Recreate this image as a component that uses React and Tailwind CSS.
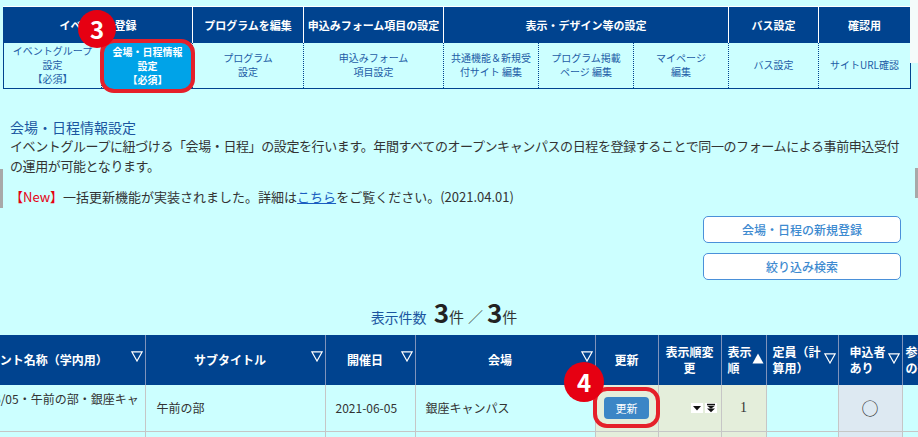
import React from 'react';

const FONT = '"Noto Sans CJK JP", "Noto Sans", sans-serif';

function SortIcon({ filled = false, two = false }) {
  return (
    <svg
      width="12"
      height="11"
      viewBox="0 0 12 11"
      className={`absolute right-[2px] ${two ? 'top-[18px]' : 'top-[16px]'}`}
    >
      {filled ? (
        <polygon points="6,0.5 11.5,10.5 0.5,10.5" fill="#ffffff" />
      ) : (
        <polygon points="0.8,0.8 11.2,0.8 6,10" fill="none" stroke="#ffffff" strokeWidth="1.2" />
      )}
    </svg>
  );
}

function OrderIcons() {
  return (
    <div className="flex justify-end gap-[2px] pr-[4px]">
      <svg width="12" height="10" viewBox="0 0 12 10">
        <rect width="12" height="10" fill="#ffffff" />
        <polygon points="2,3 10,3 6,7.5" fill="#111111" />
      </svg>
      <svg width="12" height="10" viewBox="0 0 12 10">
        <rect width="12" height="10" fill="#ffffff" />
        <rect x="2" y="0.8" width="8" height="1.4" fill="#111111" />
        <polygon points="2,2.8 10,2.8 6,5.8" fill="#111111" />
        <polygon points="2,5.6 10,5.6 6,9.2" fill="#111111" />
      </svg>
    </div>
  );
}

function NavTable() {
  return (
    <table className="border-collapse table-fixed w-[907px] border border-[#00438f]">
      <colgroup>
        <col className="w-[98px]" />
        <col className="w-[91px]" />
        <col className="w-[111px]" />
        <col className="w-[140px]" />
        <col className="w-[95px]" />
        <col className="w-[95px]" />
        <col className="w-[95px]" />
        <col className="w-[90px]" />
        <col className="w-[92px]" />
      </colgroup>
      <thead>
        <tr className="h-[36px] bg-[#00438f] text-white text-[11px] font-bold">
          <th colSpan={2} className="border-t border-white">イベントを登録</th>
          <th className="border-t border-l border-white">プログラムを編集</th>
          <th className="border-t border-l border-white">申込みフォーム項目の設定</th>
          <th colSpan={3} className="border-t border-l border-white">表示・デザイン等の設定</th>
          <th className="border-t border-l border-white">バス設定</th>
          <th className="border-t border-l border-white">確認用</th>
        </tr>
      </thead>
      <tbody>
        <tr className="h-[46px] text-[10px] leading-[14px] text-[#1d5ca6] text-center">
          <td>イベントグループ<br />設定<br />【必須】</td>
          <td className="relative border-l border-dotted border-[#00438f]">
            <div className="absolute -left-[2px] -right-[3px] -top-[4px] -bottom-[5px] rounded-[14px] border-[4px] border-[#e5202a] bg-[#00a3e8] flex items-center justify-center text-white font-bold">
              <span>会場・日程情報<br />設定<br />【必須】</span>
            </div>
          </td>
          <td className="border-l border-dotted border-[#00438f]">プログラム<br />設定</td>
          <td className="border-l border-dotted border-[#00438f]">申込みフォーム<br />項目設定</td>
          <td className="border-l border-dotted border-[#00438f]">共通機能＆新規受<br />付サイト 編集</td>
          <td className="border-l border-dotted border-[#00438f]">プログラム掲載<br />ページ 編集</td>
          <td className="border-l border-dotted border-[#00438f]">マイページ<br />編集</td>
          <td className="border-l border-dotted border-[#00438f]">バス設定</td>
          <td className="border-l border-dotted border-[#00438f]">サイトURL確認</td>
        </tr>
      </tbody>
    </table>
  );
}

function ListRow({ first }) {
  return (
    <tr className="h-[46px] text-[12px] leading-[18px] text-[#333333]">
      <td className="pl-[29px] border-b border-[#c6c6c6] whitespace-nowrap">
        2021/06/05・午前の部・銀座キャ<br />ンパス
      </td>
      <td className="pl-[11px] border-l border-b border-[#c6c6c6]">午前の部</td>
      <td className="pl-[10px] border-l border-b border-[#c6c6c6]">2021-06-05</td>
      <td className="pl-[10px] border-l border-b border-[#c6c6c6]">銀座キャンパス</td>
      <td className="border-l border-b border-[#c6c6c6] bg-[#e4eedb] text-center">
        {first ? (
          <div className="relative inline-flex items-center justify-center">
            <div className="w-[45px] h-[22px] rounded-[4px] bg-[#3b86c6] text-white text-[11px] flex items-center justify-center">更新</div>
            <div className="absolute -left-[11px] -right-[11px] -top-[10px] -bottom-[9px] rounded-[14px] border-[4px] border-[#e5202a]" />
          </div>
        ) : (
          <div className="inline-flex w-[45px] h-[22px] rounded-[4px] bg-[#3b86c6] text-white text-[11px] items-center justify-center">更新</div>
        )}
      </td>
      <td className="border-l border-b border-[#c6c6c6] bg-[#e4eedb]">
        <OrderIcons />
      </td>
      <td className="border-l border-b border-[#c6c6c6] bg-[#e4eedb] text-center font-['Liberation_Serif'] text-[14px]">
        {first ? 1 : 2}
      </td>
      <td className="border-l border-b border-[#c6c6c6]"></td>
      <td className="border-l border-b border-[#c6c6c6] bg-[#dde9f2] text-center text-[17px]">○</td>
      <td className="border-l border-b border-[#c6c6c6]"></td>
    </tr>
  );
}

function ListTable() {
  const th = 'relative border-l border-[#7f93bb] font-bold text-center pr-[10px]';
  return (
    <div className="overflow-hidden w-[918px] mt-[10px]">
      <table className="border-collapse table-fixed w-[1055px] -ml-[73px]">
        <colgroup>
          <col className="w-[218px]" />
          <col className="w-[180px]" />
          <col className="w-[90px]" />
          <col className="w-[180px]" />
          <col className="w-[63px]" />
          <col className="w-[63px]" />
          <col className="w-[45px]" />
          <col className="w-[72px]" />
          <col className="w-[64px]" />
          <col className="w-[80px]" />
        </colgroup>
        <thead>
          <tr className="h-[50px] bg-[#00438f] text-white text-[12px] leading-[16px]">
            <th className="relative font-bold text-center pl-[22px] pr-[10px]">イベント名称（学内用）<SortIcon /></th>
            <th className={th}>サブタイトル<SortIcon /></th>
            <th className={th}>開催日<SortIcon /></th>
            <th className={th}>会場<SortIcon /></th>
            <th className="border-l border-[#7f93bb] font-bold text-center">更新</th>
            <th className="border-l border-[#7f93bb] font-bold text-center">表示順変<br />更</th>
            <th className="relative border-l border-[#7f93bb] font-bold text-left pl-[6px]">表示<br />順<SortIcon filled two /></th>
            <th className="relative border-l border-[#7f93bb] font-bold text-left pl-[6px]">定員（計<br />算用）<SortIcon two /></th>
            <th className="relative border-l border-[#7f93bb] font-bold text-left pl-[11px]">申込者<br />あり<SortIcon two /></th>
            <th className="border-l border-[#7f93bb] font-bold text-left pl-[3px]">参加者<br />の有無</th>
          </tr>
        </thead>
        <tbody>
          <ListRow first />
          <ListRow />
        </tbody>
      </table>
    </div>
  );
}

export default function App() {
  return (
    <div
      className="relative w-[918px] h-[437px] overflow-hidden bg-[#ccffff]"
      style={{ fontFamily: FONT }}
    >
      <div className="pt-[6px] pl-[3px]">
        <NavTable />
      </div>

      <div className="px-[10px]">
        <h2 className="mt-[29px] text-[14px] leading-[18px] text-[#1a56a0]">会場・日程情報設定</h2>
        <p className="text-[13px] leading-[20px] tracking-[-0.4px] text-[#333333]">
          イベントグループに紐づける「会場・日程」の設定を行います。年間すべてのオープンキャンパスの日程を登録することで同一のフォームによる事前申込受付の運用が可能となります。
        </p>
        <p className="mt-[11px] text-[13px] leading-[20px] text-[#333333]">
          <span className="text-[#e60012]">【New】</span>一括更新機能が実装されました。詳細は
          <span className="text-[#1a5ec0] underline">こちら</span>をご覧ください。(2021.04.01)
        </p>
      </div>

      <div className="mt-[9px] pr-[17px] flex flex-col items-end gap-[10px]">
        <button className="w-[198px] h-[27px] rounded-[5px] border border-[#4a90d9] bg-white text-[12px] font-medium text-[#3d8ad0]">
          会場・日程の新規登録
        </button>
        <button className="w-[198px] h-[27px] rounded-[5px] border border-[#4a90d9] bg-white text-[12px] font-medium text-[#3d8ad0]">
          絞り込み検索
        </button>
      </div>

      <div className="mt-[12px] h-[33px] flex items-baseline justify-center pr-[30px]">
        <span className="text-[14px] text-[#1a56a0] mr-[7px]">表示件数</span>
        <span className="text-[26px] font-bold text-[#222222]">3</span>
        <span className="text-[15px] text-[#333333]">件</span>
        <span className="text-[15px] text-[#555555] mx-[4px]">／</span>
        <span className="text-[26px] font-bold text-[#222222]">3</span>
        <span className="text-[15px] text-[#333333]">件</span>
      </div>

      <ListTable />

      {/* annotation badges */}
      <div className="absolute left-[78px] top-[10px] w-[38px] h-[38px] rounded-full bg-[#e60012] text-white text-[24px] font-semibold flex items-center justify-center">3</div>
      <div className="absolute left-[564px] top-[362px] w-[40px] h-[40px] rounded-full bg-[#e60012] text-white text-[24px] font-semibold flex items-center justify-center">4</div>

      {/* cropped scrollbar fragments */}
      <div className="absolute right-0 top-0 w-[8px] h-[63px] bg-[#f4fbfb]" />
      <div className="absolute right-0 top-[168px] w-[3px] h-[30px] bg-[#a8a8a8]" />
      <div className="absolute left-0 top-[169px] w-[3px] h-[39px] bg-[#a8a8a8]" />
    </div>
  );
}
